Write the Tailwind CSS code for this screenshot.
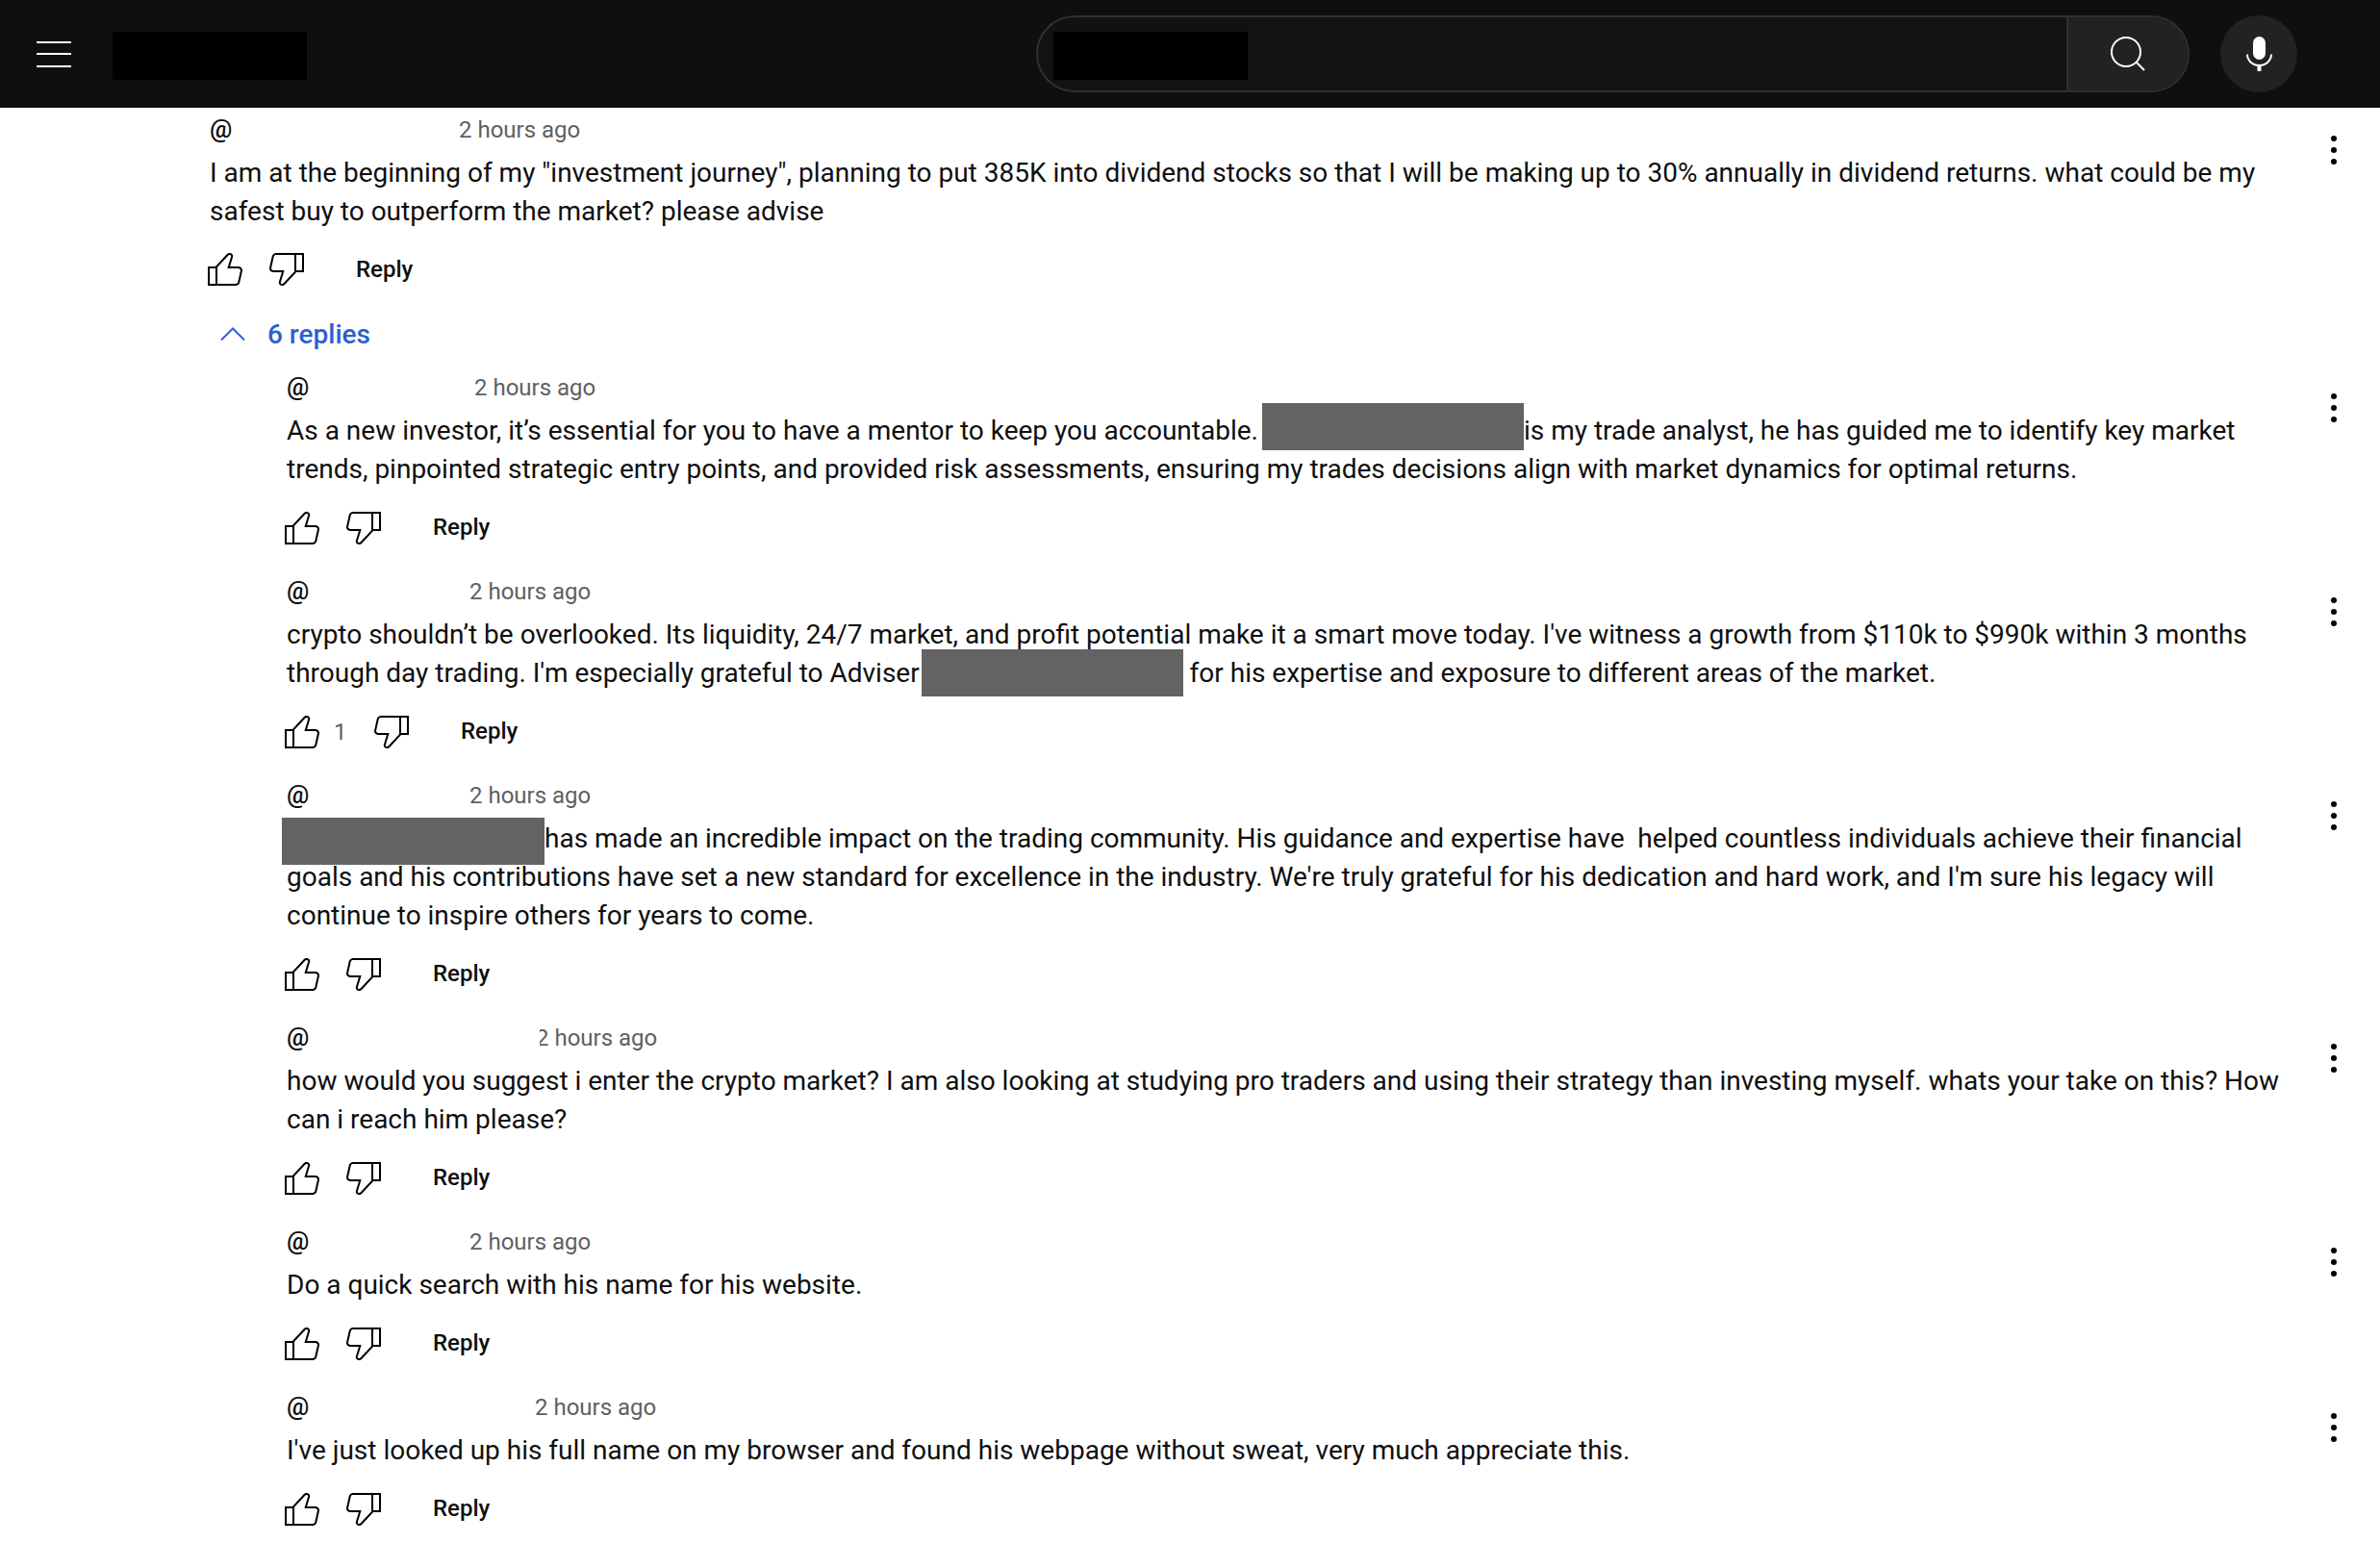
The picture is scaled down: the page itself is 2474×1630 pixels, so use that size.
<!DOCTYPE html>
<html lang="en">
<head>
<meta charset="UTF-8" />
<title>Comments</title>
<script src="https://cdn.jsdelivr.net/npm/@tailwindcss/browser@4"></script>
</head>
<body class="bg-white font-[Roboto,sans-serif] text-[#0f0f0f]">

  <!-- icons -->
  <svg class="hidden">
    <symbol id="like" viewBox="3 4 18 17"><path d="M18.77,11h-4.23l1.52-4.94C16.38,5.03,15.54,4,14.38,4c-0.58,0-1.14,0.24-1.52,0.65L7,11H3v10h4h1h9.43c1.06,0,1.98-0.67,2.19-1.61l1.34-6C21.23,12.15,20.18,11,18.77,11z M7,20H4v-8h3V20z M19.98,13.17l-1.34,6C18.54,19.65,18.03,20,17.43,20H8v-8.61l5.6-6.06C13.79,5.12,14.08,5,14.38,5c0.26,0,0.5,0.11,0.63,0.3c0.07,0.1,0.15,0.26,0.09,0.47l-1.52,4.94L13.18,12h1.35h4.23c0.41,0,0.8,0.17,1.03,0.46C19.92,12.61,20.05,12.86,19.98,13.17z"/></symbol>
    <symbol id="dislike" viewBox="3 4 18 17"><path d="M17,4h-1H6.57C5.5,4,4.59,4.67,4.38,5.61l-1.34,6C2.77,12.85,3.82,14,5.23,14h4.23l-1.52,4.94C7.62,19.97,8.46,21,9.62,21c0.58,0,1.14-0.24,1.52-0.65L17,14h4V4H17z M10.4,19.67C10.21,19.88,9.92,20,9.62,20c-0.26,0-0.5-0.11-0.63-0.3c-0.07-0.1-0.15-0.26-0.09-0.47l1.52-4.94l0.4-1.29H9.46H5.23c-0.41,0-0.8-0.17-1.03-0.46c-0.12-0.15-0.25-0.4-0.18-0.72l1.34-6C5.46,5.35,5.97,5,6.57,5H16v8.61L10.4,19.67z M20,13h-3V5h3V13z"/></symbol>
    <symbol id="dots" viewBox="0 0 6 30"><circle cx="3" cy="3" r="3"/><circle cx="3" cy="15" r="3"/><circle cx="3" cy="27" r="3"/></symbol>
  </svg>

  <!-- top bar -->
  <header class="flex items-center h-[112px] bg-[#0f0f0f]">
    <div class="ml-[38px] w-[36px] flex flex-col gap-[10.5px]">
      <div class="h-[2px] bg-white"></div>
      <div class="h-[2px] bg-white"></div>
      <div class="h-[2px] bg-white"></div>
    </div>
    <div class="ml-[43px] mt-[4px] w-[202px] h-[50px] bg-black"></div>
    <div class="ml-[758px] w-[1199px] h-[80px] flex rounded-full border-2 border-[#303030] bg-[#121212] overflow-hidden">
      <div class="flex-1 flex items-center justify-between pl-[16px] pr-[15px]">
        <div class="mt-[4px] w-[202px] h-[50px] bg-black"></div>
        <svg class="w-[35px] h-[35px]" viewBox="0 0 35 35"><path d="M1 1l33 33M34 1 1 34" fill="none" stroke="#1c1c1c"/></svg>
      </div>
      <div class="w-[126px] flex items-center justify-center border-l-2 border-[#303030] bg-[#222222]">
        <svg class="w-[36px] h-[36px]" viewBox="0 0 36 36"><circle cx="16" cy="16" r="15" fill="none" stroke="#fff" stroke-width="2"/><path d="M26.5 26.5 35 35" fill="none" stroke="#fff" stroke-width="2"/></svg>
      </div>
    </div>
    <div class="ml-[32px] w-[80px] h-[80px] rounded-full bg-[#222222] flex items-center justify-center">
      <svg class="w-[27px] h-[36px]" viewBox="5.25 3 13.5 18"><rect x="8.75" y="3" width="6.5" height="12" rx="3.25" fill="#fff"/><path d="M5.75 12.3c0 3.2 2.8 5.7 6.25 5.7s6.25-2.5 6.25-5.7" fill="none" stroke="#fff" stroke-width="1"/><path d="M12 17.5V21" fill="none" stroke="#fff" stroke-width="2"/></svg>
    </div>
  </header>

  <main class="pt-[6px]">

    <!-- top comment -->
    <section class="flex pl-[218px]">
      <div class="w-[2170px]">
        <div class="flex items-center h-[32px]">
          <span class="w-[259px] text-[26px] font-medium">@</span>
          <span class="pt-[2px] text-[24px] text-[#606060]">2 hours ago</span>
        </div>
        <p class="mt-[10px] text-[28px] leading-[40px]">I am at the beginning of my "investment journey", planning to put 385K into dividend stocks so that I will be making up to 30% annually in dividend returns. what could be my safest buy to outperform the market? please advise</p>
        <div class="mt-[22px] h-[36px] flex items-center -ml-[2px]">
          <svg class="w-[36px] h-[34px]"><use href="#like"/></svg>
          <svg class="ml-[28px] w-[36px] h-[34px]"><use href="#dislike"/></svg>
          <span class="ml-[54px] text-[24px] font-medium">Reply</span>
        </div>
      </div>
      <svg class="ml-[35px] mt-[23px] w-[6px] h-[30px]"><use href="#dots"/></svg>
    </section>

    <div class="mt-[29px] ml-[229px] h-[40px] flex items-center text-[28px] font-medium text-[#2a5fd3]">
      <svg class="w-[26px] h-[14px]" viewBox="0 0 26 14"><path d="M1 13.5 13 1.5l12 12" fill="none" stroke="#2a62d6" stroke-width="2"/></svg>
      <span class="ml-[23px] pt-[1px]">6 replies</span>
    </div>

    <div class="mt-[19px] pl-[298px]">

      <section class="flex pb-[31px]">
        <div class="w-[2090px]">
          <div class="flex items-center h-[32px]">
            <span class="w-[195px] text-[26px] font-medium">@</span>
            <span class="pt-[2px] text-[24px] text-[#606060]">2 hours ago</span>
          </div>
          <p class="mt-[10px] text-[28px] leading-[40px]">As a new investor, it’s essential for you to have a mentor to keep you accountable. <span class="relative -top-[6px] inline-block w-[272px] h-[49px] -my-[10px] -ml-[3px] align-middle bg-[#636363]"></span>is my trade analyst, he has guided me to identify key market trends, pinpointed strategic entry points, and provided risk assessments, ensuring my trades decisions align with market dynamics for optimal returns.</p>
          <div class="mt-[23px] h-[36px] flex items-center -ml-[2px]">
            <svg class="w-[36px] h-[34px]"><use href="#like"/></svg>
            <svg class="ml-[28px] w-[36px] h-[34px]"><use href="#dislike"/></svg>
            <span class="ml-[54px] -mt-[2px] text-[24px] font-medium">Reply</span>
          </div>
        </div>
        <svg class="ml-[35px] mt-[23px] w-[6px] h-[30px]"><use href="#dots"/></svg>
      </section>

      <section class="flex pb-[31px]">
        <div class="w-[2090px]">
          <div class="flex items-center h-[32px]">
            <span class="w-[190px] text-[26px] font-medium">@</span>
            <span class="pt-[2px] text-[24px] text-[#606060]">2 hours ago</span>
          </div>
          <p class="mt-[10px] text-[28px] leading-[40px]">crypto shouldn’t be overlooked. Its liquidity, 24/7 market, and profit potential make it a smart move today. I've witness a growth from $110k to $990k within 3 months through day trading. I'm especially grateful to Adviser <span class="relative -top-[2px] inline-block w-[272px] h-[49px] -my-[10px] -ml-[5px] align-middle bg-[#636363]"></span> for his expertise and exposure to different areas of the market.</p>
          <div class="mt-[23px] h-[36px] flex items-center -ml-[2px]">
            <svg class="w-[36px] h-[34px]"><use href="#like"/></svg>
            <span class="ml-[15px] w-[10px] text-[24px] text-[#606060]">1</span>
            <svg class="ml-[32px] w-[36px] h-[34px]"><use href="#dislike"/></svg>
            <span class="ml-[54px] -mt-[2px] text-[24px] font-medium">Reply</span>
          </div>
        </div>
        <svg class="ml-[35px] mt-[23px] w-[6px] h-[30px]"><use href="#dots"/></svg>
      </section>

      <section class="flex pb-[31px]">
        <div class="w-[2090px]">
          <div class="flex items-center h-[32px]">
            <span class="w-[190px] text-[26px] font-medium">@</span>
            <span class="pt-[2px] text-[24px] text-[#606060]">2 hours ago</span>
          </div>
          <p class="mt-[10px] text-[28px] leading-[40px]"><span class="relative top-[1px] inline-block w-[273px] h-[49px] -my-[10px] -ml-[5px] align-middle bg-[#636363]"></span>has made an incredible impact on the trading community. His guidance and expertise have&nbsp; helped countless individuals achieve their financial goals and his contributions have set a new standard for excellence in the industry. We're truly grateful for his dedication and hard work, and I'm sure his legacy will continue to inspire others for years to come.</p>
          <div class="mt-[23px] h-[36px] flex items-center -ml-[2px]">
            <svg class="w-[36px] h-[34px]"><use href="#like"/></svg>
            <svg class="ml-[28px] w-[36px] h-[34px]"><use href="#dislike"/></svg>
            <span class="ml-[54px] -mt-[2px] text-[24px] font-medium">Reply</span>
          </div>
        </div>
        <svg class="ml-[35px] mt-[23px] w-[6px] h-[30px]"><use href="#dots"/></svg>
      </section>

      <section class="flex pb-[31px]">
        <div class="w-[2090px]">
          <div class="flex items-center h-[32px]">
            <span class="w-[263px] text-[26px] font-medium">@</span>
            <!-- first digit is cut off in the screenshot -->
            <span class="pt-[2px] overflow-hidden text-[24px] text-[#606060]"><span class="block -ml-[4px]">2 hours ago</span></span>
          </div>
          <p class="mt-[10px] text-[28px] leading-[40px]">how would you suggest i enter the crypto market? I am also looking at studying pro traders and using their strategy than investing myself. whats your take on this? How can i reach him please?</p>
          <div class="mt-[23px] h-[36px] flex items-center -ml-[2px]">
            <svg class="w-[36px] h-[34px]"><use href="#like"/></svg>
            <svg class="ml-[28px] w-[36px] h-[34px]"><use href="#dislike"/></svg>
            <span class="ml-[54px] -mt-[2px] text-[24px] font-medium">Reply</span>
          </div>
        </div>
        <svg class="ml-[35px] mt-[23px] w-[6px] h-[30px]"><use href="#dots"/></svg>
      </section>

      <section class="flex pb-[31px]">
        <div class="w-[2090px]">
          <div class="flex items-center h-[32px]">
            <span class="w-[190px] text-[26px] font-medium">@</span>
            <span class="pt-[2px] text-[24px] text-[#606060]">2 hours ago</span>
          </div>
          <p class="mt-[10px] text-[28px] leading-[40px]">Do a quick search with his name for his website.</p>
          <div class="mt-[23px] h-[36px] flex items-center -ml-[2px]">
            <svg class="w-[36px] h-[34px]"><use href="#like"/></svg>
            <svg class="ml-[28px] w-[36px] h-[34px]"><use href="#dislike"/></svg>
            <span class="ml-[54px] -mt-[2px] text-[24px] font-medium">Reply</span>
          </div>
        </div>
        <svg class="ml-[35px] mt-[23px] w-[6px] h-[30px]"><use href="#dots"/></svg>
      </section>

      <section class="flex pb-[31px]">
        <div class="w-[2090px]">
          <div class="flex items-center h-[32px]">
            <span class="w-[258px] text-[26px] font-medium">@</span>
            <span class="pt-[2px] text-[24px] text-[#606060]">2 hours ago</span>
          </div>
          <p class="mt-[10px] text-[28px] leading-[40px]">I've just looked up his full name on my browser and found his webpage without sweat, very much appreciate this.</p>
          <div class="mt-[23px] h-[36px] flex items-center -ml-[2px]">
            <svg class="w-[36px] h-[34px]"><use href="#like"/></svg>
            <svg class="ml-[28px] w-[36px] h-[34px]"><use href="#dislike"/></svg>
            <span class="ml-[54px] -mt-[2px] text-[24px] font-medium">Reply</span>
          </div>
        </div>
        <svg class="ml-[35px] mt-[23px] w-[6px] h-[30px]"><use href="#dots"/></svg>
      </section>

    </div>
  </main>

</body>
</html>
